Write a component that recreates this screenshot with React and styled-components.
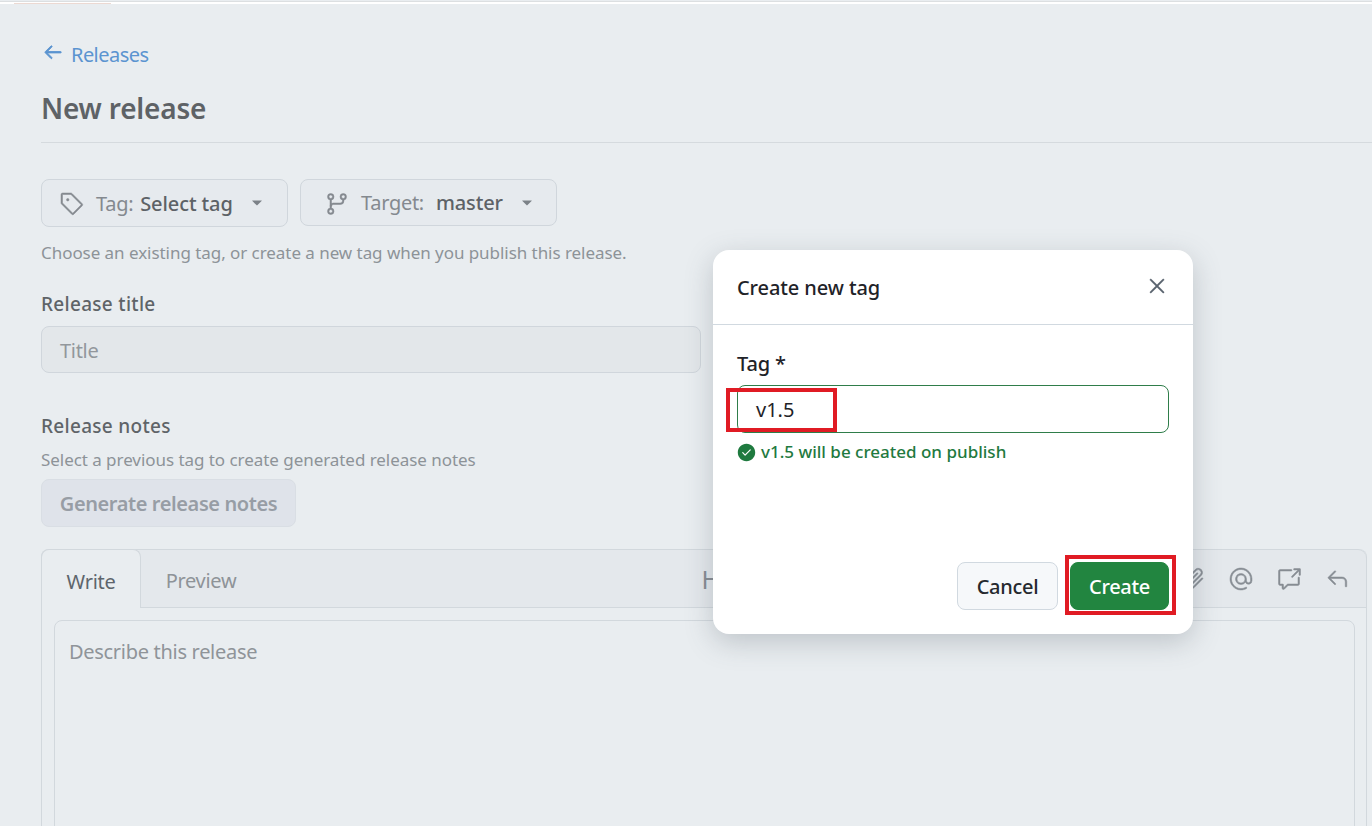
import React from 'react';
import styled, { createGlobalStyle } from 'styled-components';
import {
  GoArrowLeft,
  GoCheckCircleFill,
  GoCrossReference,
  GoGitBranch,
  GoMention,
  GoPaperclip,
  GoReply,
  GoTag,
  GoTriangleDown,
  GoX,
} from 'react-icons/go';

const GlobalStyle = createGlobalStyle`
  html, body {
    margin: 0;
    height: 826px;
    overflow: hidden;
    background: #e9edf0;
    font-family: "Noto Sans", "Liberation Sans", sans-serif;
  }
  * {
    box-sizing: border-box;
  }
`;

const Page = styled.div`
  position: relative;
  width: 1372px;
  height: 826px;
  overflow: hidden;
  background: #e9edf0;
`;

const TopEdge = styled.div`
  height: 3px;
  margin-top: 1px;
  background: #fff;
  border-top: 1px solid #dcdfe1;
`;

const TopMark = styled.div`
  width: 97px;
  height: 1px;
  margin: 1px 0 0 14px;
  background: #ecd9d2;
`;

const Main = styled.main`
  padding: 38px 5px 0 41px;
`;

const BackLink = styled.a`
  display: flex;
  align-items: center;
  gap: 7px;
  height: 24px;
  padding-left: 1px;
  font-size: 20px;
  letter-spacing: -0.55px;
  color: #5b94d0;
`;

const BackArrow = styled(GoArrowLeft)`
  margin-top: -5px;
  stroke: currentColor;
  stroke-width: 1;
`;

const Title = styled.h1`
  margin: 23px -5px 0 0;
  padding-bottom: 13px;
  height: 54px;
  font-size: 28px;
  line-height: 38px;
  font-weight: 600;
  letter-spacing: -0.2px;
  color: #5e6266;
  border-bottom: 1px solid #d5dade;
`;

const PickerRow = styled.div`
  display: flex;
  gap: 12px;
  margin-top: 36px;
`;

const Picker = styled.button`
  display: flex;
  align-items: center;
  width: ${p => p.$width}px;
  height: ${p => p.$height}px;
  padding: 0 0 0 ${p => p.$pad}px;
  font: inherit;
  font-size: 20px;
  letter-spacing: -0.3px;
  color: #84898f;
  background: #e6eaee;
  border: 1px solid #d0d6dc;
  border-radius: 8px;
`;

const PickerIcon = styled.span`
  display: flex;
  margin: 2px ${p => p.$gap}px 0 0;

  svg {
    stroke: currentColor;
    stroke-width: 0.5;
  }
`;

const PickerValue = styled.strong`
  margin-left: ${p => p.$gap}px;
  font-weight: 500;
  letter-spacing: -0.1px;
  color: #5d6267;
`;

const Caret = styled(GoTriangleDown)`
  margin-left: ${p => p.$gap}px;
  color: #7c8288;
`;

const Hint = styled.p`
  margin: ${p => p.$top}px 0 0;
  font-size: 17px;
  line-height: 24px;
  letter-spacing: -0.05px;
  color: #8d9398;
`;

const FieldLabel = styled.div`
  margin-top: ${p => p.$top}px;
  font-size: 19px;
  line-height: 26px;
  font-weight: 500;
  letter-spacing: 0.3px;
  color: #5f6468;
`;

const TitleInput = styled.div`
  display: flex;
  align-items: center;
  width: 660px;
  height: 47px;
  margin-top: 9px;
  padding: 1px 0 0 18px;
  font-size: 20px;
  letter-spacing: -0.3px;
  color: #92979c;
  background: #e3e7ea;
  border: 1px solid #d0d6dc;
  border-radius: 8px;
`;

const GenerateButton = styled.button`
  display: block;
  width: 255px;
  height: 48px;
  margin-top: 7px;
  font: inherit;
  font-size: 20px;
  font-weight: 600;
  letter-spacing: -0.4px;
  color: #979da5;
  background: #dfe3ea;
  border: 1px solid #d9dee4;
  border-radius: 8px;
`;

const Editor = styled.section`
  height: 400px;
  margin-top: 22px;
  border: 1px solid #d2d8dd;
  border-top: 0;
  border-radius: 8px 8px 0 0;
`;

const EditorHead = styled.div`
  display: flex;
  align-items: flex-end;
  height: 59px;
  background: #e4e8ec;
  border-bottom: 1px solid #d2d8dd;
  box-shadow: inset 0 1px 0 #d2d8dd;
  border-radius: 8px 8px 0 0;
`;

const Tab = styled.div`
  display: flex;
  align-items: center;
  justify-content: center;
  height: 59px;
  font-size: 20px;
  letter-spacing: -0.3px;
  width: ${p => (p.$active ? 100 : 120)}px;
  margin: ${p => (p.$active ? '0 0 -1px -1px' : '0')};
  padding-top: ${p => (p.$active ? 4 : 6)}px;
  color: ${p => (p.$active ? '#5e656c' : '#8e9398')};
  background: ${p => (p.$active ? '#e9edf0' : 'transparent')};
  border: ${p => (p.$active ? '1px solid #d2d8dd' : '0')};
  border-bottom: 0;
  border-radius: 8px 8px 0 0;
`;

const Tools = styled.div`
  display: flex;
  align-items: center;
  gap: 24px;
  height: 58px;
  margin-left: auto;
  padding: 2px 17px 0 0;
  color: #868c93;

  svg {
    stroke: currentColor;
    stroke-width: 0.5;
  }
`;

const HeadingTool = styled.span`
  margin-right: 437px;
  font-size: 25px;
  line-height: 1;
`;

const Textarea = styled.div`
  height: 320px;
  margin: 12px 11px 0 12px;
  padding: 17px 14px;
  font-size: 20px;
  line-height: 28px;
  letter-spacing: -0.3px;
  color: #8f9499;
  border: 1px solid #d2d8dd;
  border-radius: 8px;
`;

const Modal = styled.div`
  position: absolute;
  left: 713px;
  top: 250px;
  width: 480px;
  height: 384px;
  background: #fff;
  border-radius: 16px;
  box-shadow: 0 8px 28px rgba(80, 90, 100, 0.28);
`;

const ModalHead = styled.header`
  display: flex;
  align-items: center;
  justify-content: space-between;
  height: 75px;
  padding: 0 24px;
  font-size: 20px;
  font-weight: 500;
  letter-spacing: -0.1px;
  color: #1f2328;
  border-bottom: 1px solid #d1d9e0;
`;

const CloseIcon = styled(GoX)`
  margin: -3px -1px 0 0;
  color: #59636e;
  stroke: currentColor;
  stroke-width: 0.4;
`;

const ModalBody = styled.div`
  padding: 25px 24px 0;
`;

const TagLabel = styled.label`
  display: block;
  font-size: 20px;
  line-height: 28px;
  font-weight: 500;
  letter-spacing: -0.2px;
  color: #1f2328;
`;

const TagInput = styled.div`
  display: flex;
  align-items: center;
  height: 48px;
  margin-top: 7px;
  padding-left: 18px;
  font-size: 20px;
  color: #1f2328;
  border: 1px solid #2f7d4a;
  border-radius: 8px;
`;

const Valid = styled.div`
  display: flex;
  align-items: center;
  gap: 5px;
  margin-top: 7px;
  font-size: 17px;
  line-height: 24px;
  font-weight: 500;
  letter-spacing: 0;
  color: #1f7a3f;
`;

const ModalFoot = styled.footer`
  position: absolute;
  right: 24px;
  bottom: 24px;
  display: flex;
  gap: 12px;
`;

const Button = styled.button`
  height: 48px;
  width: ${p => p.$width}px;
  font: inherit;
  font-size: 20px;
  font-weight: 500;
  letter-spacing: -0.3px;
  color: ${p => (p.$primary ? '#fff' : '#25292e')};
  background: ${p => (p.$primary ? '#228540' : '#f6f8fa')};
  border: 1px solid ${p => (p.$primary ? '#228540' : '#d1d9e0')};
  border-radius: 8px;
`;

const Callout = styled.div`
  position: absolute;
  left: ${p => p.$x}px;
  top: ${p => p.$y}px;
  width: ${p => p.$w}px;
  height: ${p => p.$h}px;
  border: 4px solid #e01b24;
  pointer-events: none;
`;

export default function App() {
  return (
    <Page>
      <GlobalStyle />
      <TopEdge>
        <TopMark />
      </TopEdge>
      <Main>
        <BackLink>
          <BackArrow size={22} />
          Releases
        </BackLink>
        <Title>New release</Title>

        <PickerRow>
          <Picker $width={247} $height={48} $pad={18}>
            <PickerIcon $gap={12}>
              <GoTag size={24} />
            </PickerIcon>
            Tag:
            <PickerValue $gap={7}>Select tag</PickerValue>
            <Caret size={18} $gap={15} />
          </Picker>
          <Picker $width={257} $height={47} $pad={24}>
            <PickerIcon $gap={12}>
              <GoGitBranch size={24} />
            </PickerIcon>
            Target:
            <PickerValue $gap={12}>master</PickerValue>
            <Caret size={18} $gap={15} />
          </Picker>
        </PickerRow>
        <Hint $top={14}>Choose an existing tag, or create a new tag when you publish this release.</Hint>

        <FieldLabel $top={26}>Release title</FieldLabel>
        <TitleInput>Title</TitleInput>

        <FieldLabel $top={40}>Release notes</FieldLabel>
        <Hint $top={9}>Select a previous tag to create generated release notes</Hint>
        <GenerateButton>Generate release notes</GenerateButton>

        <Editor>
          <EditorHead>
            <Tab $active>Write</Tab>
            <Tab>Preview</Tab>
            <Tools>
              <HeadingTool>H</HeadingTool>
              <GoPaperclip size={24} />
              <GoMention size={24} />
              <GoCrossReference size={24} />
              <GoReply size={24} />
            </Tools>
          </EditorHead>
          <Textarea>Describe this release</Textarea>
        </Editor>
      </Main>

      <Modal>
        <ModalHead>
          Create new tag
          <CloseIcon size={26} />
        </ModalHead>
        <ModalBody>
          <TagLabel>Tag *</TagLabel>
          <TagInput>v1.5</TagInput>
          <Valid>
            <GoCheckCircleFill size={19} />
            v1.5 will be created on publish
          </Valid>
        </ModalBody>
        <ModalFoot>
          <Button $width={101}>Cancel</Button>
          <Button $width={99} $primary>Create</Button>
        </ModalFoot>
      </Modal>

      <Callout $x={726} $y={388} $w={111} $h={44} />
      <Callout $x={1065} $y={555} $w={111} $h={60} />
    </Page>
  );
}
